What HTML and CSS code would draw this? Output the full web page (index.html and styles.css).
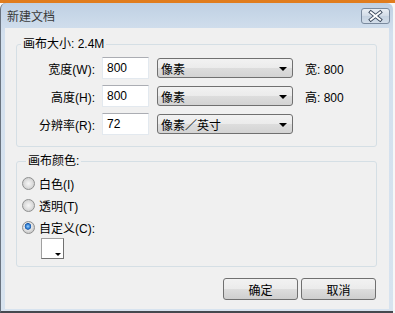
FILE: index.html
```html
<!DOCTYPE html>
<html lang="zh-CN">
<head>
    <meta charset="UTF-8">
    <title>新建文档</title>
    <link rel="stylesheet" href="styles.css">
</head>
<body>

    <div class="desk">
        <div class="window">
            <div class="titlebar">
                <span class="title">新建文档</span>
                <span class="close">
                    <svg width="29" height="16" viewBox="0 0 29 16">
                        <path d="M9.5 4 L19.5 12 M19.5 4 L9.5 12" stroke="#3d4b5e" stroke-width="4" stroke-linecap="square"/>
                        <path d="M9.5 4 L19.5 12 M19.5 4 L9.5 12" stroke="#ffffff" stroke-width="2" stroke-linecap="square"/>
                    </svg>
                </span>
            </div>

            <div class="client">
                <fieldset class="group size-group">
                    <legend>画布大小: 2.4M</legend>
                    <div class="size-grid">
                        <div class="field-label">宽度(W):</div>
                        <div class="textbox">800</div>
                        <div class="combo"><span>像素</span><span class="arrow"></span></div>
                        <div class="info">宽: 800</div>

                        <div class="field-label">高度(H):</div>
                        <div class="textbox">800</div>
                        <div class="combo"><span>像素</span><span class="arrow"></span></div>
                        <div class="info">高: 800</div>

                        <div class="field-label">分辨率(R):</div>
                        <div class="textbox">72</div>
                        <div class="combo"><span>像素／英寸</span><span class="arrow"></span></div>
                        <div class="info"></div>
                    </div>
                </fieldset>

                <fieldset class="group color-group">
                    <legend>画布颜色:</legend>
                    <div class="radio-row"><span class="radio"></span>白色(I)</div>
                    <div class="radio-row"><span class="radio"></span>透明(T)</div>
                    <div class="radio-row"><span class="radio checked"></span>自定义(C):</div>
                    <div class="swatch"><span class="swatch-arrow"></span></div>
                </fieldset>

                <div class="buttons">
                    <div class="btn">确定</div>
                    <div class="btn">取消</div>
                </div>
            </div>
        </div>
    </div>

</body>
</html>
```

FILE: styles.css
```css
body {
    margin: 0;
    padding: 0;
    width: 395px;
    height: 313px;
    overflow: hidden;
    font-family: "Liberation Sans", "Noto Sans CJK SC", sans-serif;
    font-size: 12px;
    color: #000;
}
.desk {
    height: 313px;
    box-sizing: border-box;
    padding-top: 3px;
    background: linear-gradient(#e07c1d 0 3px, #f7f7f7 3px);
}
.window {
    width: 393px;
    height: 310px;
    box-sizing: border-box;
    display: flex;
    flex-direction: column;
    padding: 0 4px 2px 4px;
    background: linear-gradient(#bfd0e3, #d3e0ee 30px, #d7e3ef);
    border-left: 1px solid #6a7480;
    border-bottom: 2px solid #45494f;
    border-radius: 6px 6px 0 0;
}
.titlebar {
    height: 25px;
    display: flex;
    align-items: center;
    justify-content: space-between;
    margin-right: -1px;
}
.title {
    padding-left: 2px;
    color: #3a3a3a;
    font-size: 12px;
}
.close {
    width: 29px;
    height: 16px;
    box-sizing: border-box;
    display: flex;
    align-items: center;
    justify-content: center;
    border: 1px solid #7a8a9e;
    border-radius: 3px;
    background: linear-gradient(#e9eef4, #d2dce7 50%, #c5d2e0 51%, #d3deea);
    margin-top: 1px;
}
.close svg {
    display: block;
}
.client {
    flex: 1;
    background: #f0f0f0;
    padding: 9px 12px 0 11px;
}
.group {
    margin: 0;
    border: 1px solid #d5dfe5;
    border-radius: 3px;
    min-width: 0;
}
.group legend {
    padding: 0 2px;
    margin-left: 4px;
    line-height: 14px;
}
.size-group {
    padding: 6px 0 11px 0;
}
.size-grid {
    display: grid;
    grid-template-columns: 85px 55px 148px auto;
    grid-auto-rows: 22px;
    row-gap: 6px;
    align-items: center;
}
.field-label {
    text-align: right;
    padding-right: 7px;
}
.textbox {
    width: 47px;
    height: 22px;
    box-sizing: border-box;
    padding-left: 4px;
    line-height: 20px;
    background: #fff;
    border: 1px solid #e3e9ef;
    border-top-color: #abadb3;
    font-size: 12px;
}
.combo {
    width: 136px;
    height: 20px;
    box-sizing: border-box;
    display: flex;
    align-items: center;
    justify-content: space-between;
    padding: 0 5px 0 3px;
    border: 1px solid #707070;
    border-radius: 3px;
    background: linear-gradient(#f2f2f2, #ebebeb 50%, #dddddd 51%, #d3d3d3);
}
.arrow {
    width: 0;
    height: 0;
    border-left: 4px solid transparent;
    border-right: 4px solid transparent;
    border-top: 4px solid #000;
    margin-top: 1px;
}
.color-group {
    margin-top: 7px;
    padding: 4px 0 7px 5px;
}
.radio-row {
    height: 22px;
    display: flex;
    align-items: center;
}
.radio {
    width: 13px;
    height: 13px;
    box-sizing: border-box;
    margin-right: 4px;
    border: 1px solid #8e8f8f;
    border-radius: 50%;
    background: radial-gradient(circle at 50% 50%, #f6f6f6 0, #e4e4e4 3px, #cfcfcf 6px);
}
.radio.checked {
    background: radial-gradient(circle at 45% 40%, #9fd4ff 0, #3583d6 2px, #1d5aa8 3px, #e8e8e8 3.6px, #cfcfcf 6px);
}
.swatch {
    position: relative;
    width: 23px;
    height: 21px;
    box-sizing: border-box;
    margin-left: 19px;
    background: #fff;
    border: 1px solid #a0a0a0;
    border-right-color: #707070;
    border-bottom-color: #707070;
}
.swatch-arrow {
    position: absolute;
    right: 2px;
    bottom: 2px;
    width: 0;
    height: 0;
    border-left: 3px solid transparent;
    border-right: 3px solid transparent;
    border-top: 3px solid #000;
}
.buttons {
    display: flex;
    justify-content: flex-end;
    gap: 3px;
    margin-top: 11px;
    margin-right: 1px;
}
.btn {
    width: 75px;
    height: 22px;
    box-sizing: border-box;
    display: flex;
    align-items: center;
    justify-content: center;
    border: 1px solid #707070;
    border-radius: 3px;
    background: linear-gradient(#f2f2f2, #ebebeb 50%, #dddddd 51%, #cfcfcf);
}
```
